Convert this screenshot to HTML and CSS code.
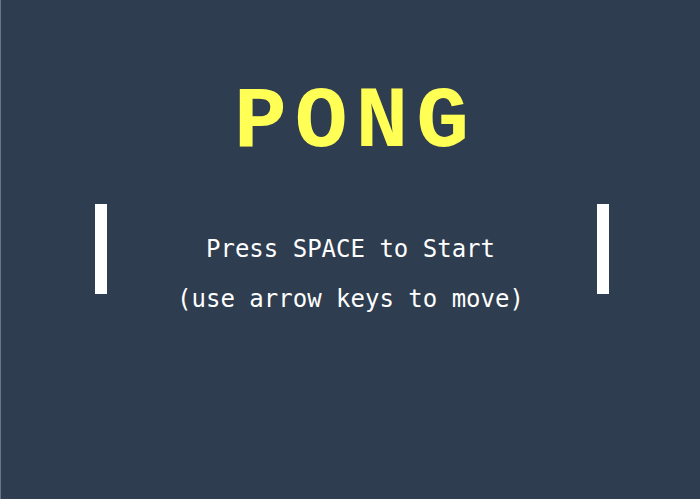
FILE: index.html
```html
<!DOCTYPE html>
<html lang="en">
<head>
<meta charset="utf-8">
<title>Pong</title>
<link rel="stylesheet" href="styles.css">
</head>
<body>
<main class="screen">
  <div class="paddle paddle-left"></div>
  <div class="paddle paddle-right"></div>
  <h1 class="title">PONG</h1>
  <div class="prompt">
    <p class="line">Press SPACE to Start</p>
    <p class="line">(use arrow keys to move)</p>
  </div>
</main>
</body>
</html>
```

FILE: styles.css
```css
html, body {
  margin: 0;
  padding: 0;
  background: #2e3d4f;
  overflow: hidden;
}

.screen {
  position: relative;
  width: 700px;
  height: 499px;
  box-sizing: border-box;
  border-left: 1px solid #6a7684;
  background: #2e3d4f;
  padding-top: 79px;
  display: flex;
  flex-direction: column;
  align-items: stretch;
}

.title {
  margin: 0;
  font-family: "Courier New", "Liberation Mono", monospace;
  font-weight: bold;
  font-size: 88px;
  line-height: 88px;
  letter-spacing: 8px;
  padding-left: 10px;
  color: #ffff55;
  text-align: center;
}

.prompt {
  margin-top: 57px;
  display: flex;
  flex-direction: column;
}

.line {
  margin: 0;
  font-family: "DejaVu Sans Mono", monospace;
  font-size: 24px;
  line-height: 50px;
  color: #ffffff;
  text-align: center;
}

.paddle {
  position: absolute;
  top: 204px;
  width: 12px;
  height: 90px;
  background: #ffffff;
}

.paddle-left {
  left: 94px;
}

.paddle-right {
  left: 596px;
}
```
